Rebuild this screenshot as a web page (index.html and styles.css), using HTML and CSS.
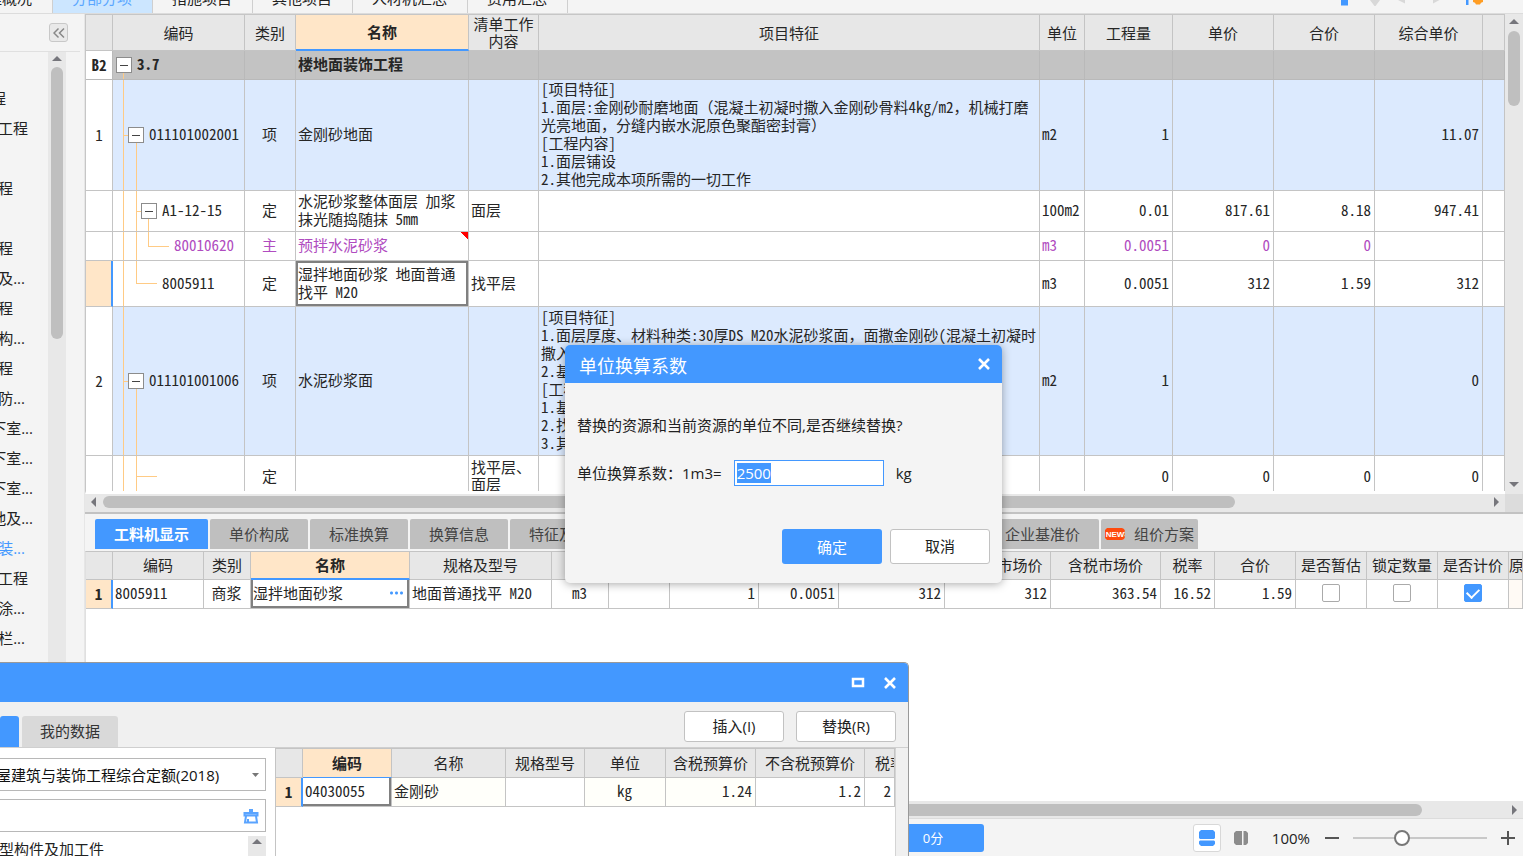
FILE: index.html
```html
<!DOCTYPE html>
<html lang="zh-CN">
<head>
<meta charset="utf-8">
<title>分部分项</title>
<link rel="stylesheet" href="styles.css">
</head>
<body>
<div class="app">
  <header class="topbar">
    <nav class="toptabs">
      <button class="toptab first">工程概况</button>
      <button class="toptab active">分部分项</button>
      <button class="toptab">措施项目</button>
      <button class="toptab">其他项目</button>
      <button class="toptab">人材机汇总</button>
      <button class="toptab">费用汇总</button>
    </nav>
    <svg class="topicons" width="150" height="13" viewBox="0 0 150 13" aria-hidden="true">
      <path fill="#4398ff" d="M6 0h7v5.500H6zM131 0h2.500v5h-2.500z"/>
      <path fill="#d8d8d8" d="M35 0h10l-4.500 6h-1zM63 0h7v3.500zM98 0h6.500l-6.500 3.500z"/>
      <path fill="#ff9d23" d="M138 0h10v2l-2 .8-1 1.700h-4l-1-1.700-2-.8z"/>
    </svg>
  </header>

  <div class="body">
    <aside class="side">
      <div class="side-head">
        <button class="collapse" aria-label="收起">
          <svg width="12" height="12" viewBox="0 0 12 12"><path d="M5.500 1.500 1 6l4.500 4.500M11 1.500 6.500 6l4.500 4.500" fill="none" stroke="#888" stroke-width="1.500"/></svg>
        </button>
      </div>
      <div class="side-main">
        <ul class="tree">
          <li></li>
          <li class="e">工程</li>
          <li class="b">工程</li>
          <li></li>
          <li class="d">工程</li>
          <li></li>
          <li class="d">工程</li>
          <li class="c">及...</li>
          <li class="d">工程</li>
          <li class="c">构...</li>
          <li class="d">工程</li>
          <li class="c">防...</li>
          <li class="a">下室...</li>
          <li class="a">下室...</li>
          <li class="a">下室...</li>
          <li class="a">他及...</li>
          <li class="c sel">装...</li>
          <li class="b">工程</li>
          <li class="c">涂...</li>
          <li class="c">栏...</li>
        </ul>
        <div class="vbar side-bar"><i class="tri up"></i><i class="thumb"></i></div>
      </div>
    </aside>

    <main class="content">
      <section class="upper">
        <div class="upper-row">
          <div class="grid-clip">
            <table class="grid main-grid">
              <colgroup><col class="w27"><col class="w132"><col class="w51"><col class="w173"><col class="w70"><col><col class="w45"><col class="w88"><col class="w101"><col class="w101"><col class="w108"><col class="w22"></colgroup>
              <thead>
                <tr class="h36"><th></th><th>编码</th><th>类别</th><th class="hot">名称</th><th>清单工作<br>内容</th><th>项目特征</th><th>单位</th><th>工程量</th><th>单价</th><th>合价</th><th>综合单价</th><th></th></tr>
              </thead>
              <tbody>
                <tr class="h29 group"><td class="rn">B2</td><td class="code t0"><button class="tg" aria-label="折叠"></button>3.7</td><td></td><td>楼地面装饰工程</td><td></td><td></td><td></td><td></td><td></td><td></td><td></td><td></td></tr>
                <tr class="h111 item"><td class="rn">1</td><td class="code t1"><button class="tg" aria-label="折叠"></button>011101002001</td><td class="c">项</td><td>金刚砂地面</td><td></td><td>[项目特征]<br>1.面层:金刚砂耐磨地面（混凝土初凝时撒入金刚砂骨料4kg/m2，机械打磨<br>光亮地面，分缝内嵌水泥原色聚酯密封膏）<br>[工程内容]<br>1.面层铺设<br>2.其他完成本项所需的一切工作</td><td>m2</td><td class="r">1</td><td></td><td></td><td class="r">11.07</td><td></td></tr>
                <tr class="h41"><td class="rn"></td><td class="code t2"><button class="tg" aria-label="折叠"></button>A1-12-15</td><td class="c">定</td><td>水泥砂浆整体面层 加浆<br>抹光随捣随抹 5mm</td><td>面层</td><td></td><td>100m2</td><td class="r">0.01</td><td class="r">817.61</td><td class="r">8.18</td><td class="r">947.41</td><td></td></tr>
                <tr class="h29 sub"><td class="rn"></td><td class="code t3">80010620</td><td class="c">主</td><td class="flag">预拌水泥砂浆</td><td></td><td></td><td>m3</td><td class="r">0.0051</td><td class="r">0</td><td class="r">0</td><td></td><td></td></tr>
                <tr class="h46"><td class="rn cur"></td><td class="code t4">8005911</td><td class="c">定</td><td class="picked">湿拌地面砂浆 地面普通<br>找平 M20</td><td>找平层</td><td></td><td>m3</td><td class="r">0.0051</td><td class="r">312</td><td class="r">1.59</td><td class="r">312</td><td></td></tr>
                <tr class="h149 item"><td class="rn">2</td><td class="code t1"><button class="tg" aria-label="折叠"></button>011101001006</td><td class="c">项</td><td>水泥砂浆面</td><td></td><td>[项目特征]<br>1.面层厚度、材料种类:30厚DS M20水泥砂浆面，面撒金刚砂(混凝土初凝时<br>撒入<br>2.基<br>[工程内容]<br>1.基<br>2.找<br>3.其</td><td>m2</td><td class="r">1</td><td></td><td></td><td class="r">0</td><td></td></tr>
                <tr class="h41 tight"><td class="rn"></td><td class="code t5"></td><td class="c">定</td><td></td><td>找平层、<br>面层</td><td></td><td></td><td class="r">0</td><td class="r">0</td><td class="r">0</td><td class="r">0</td><td></td></tr>
              </tbody>
            </table>
          </div>
          <div class="vbar main-bar"><i class="tri up"></i><i class="thumb"></i><i class="tri down"></i></div>
        </div>
        <div class="hbar-row"><div class="hbar"><i class="tri left"></i><i class="thumb"></i><i class="tri right"></i></div><div class="corner"></div></div>
      </section>

      <section class="lower">
        <nav class="subtabs">
          <button class="subtab active">工料机显示</button>
          <button class="subtab">单价构成</button>
          <button class="subtab">标准换算</button>
          <button class="subtab">换算信息</button>
          <button class="subtab">特征及内容</button>
          <button class="subtab push">企业基准价</button>
          <button class="subtab new"><svg width="20" height="12" viewBox="0 0 20 12" aria-hidden="true"><path fill="#ff4a0d" d="M2 0h15l2 1 1 2-1 1.500 1 1.500-1 1.500 1 1.500-1 2-2 1H2L0 10V2z"/><text x="10" y="9" text-anchor="middle" class="newtext">NEW</text></svg>组价方案</button>
        </nav>
        <div class="lower-grid">
          <table class="grid res-grid">
            <colgroup><col class="w27"><col class="w91"><col class="w47"><col class="w159"><col class="w142"><col class="w57"><col class="w61"><col class="w89"><col class="w80"><col class="w106"><col class="w106"><col class="w110"><col class="w54"><col class="w81"><col class="w71"><col class="w71"><col class="w71"><col></colgroup>
            <thead><tr class="h28"><th></th><th>编码</th><th>类别</th><th class="hot">名称</th><th>规格及型号</th><th>单位</th><th></th><th></th><th></th><th></th><th>不含税市场价</th><th>含税市场价</th><th>税率</th><th>合价</th><th>是否暂估</th><th>锁定数量</th><th>是否计价</th><th class="left">原</th></tr></thead>
            <tbody><tr class="h29"><td class="rn cur bold">1</td><td>8005911</td><td class="c">商浆</td><td class="picked"><div class="split">湿拌地面砂浆<button class="more" aria-label="选择"></button></div></td><td>地面普通找平 M20</td><td class="c">m3</td><td></td><td class="r">1</td><td class="r">0.0051</td><td class="r">312</td><td class="r">312</td><td class="r">363.54</td><td class="r">16.52</td><td class="r">1.59</td><td class="c"><input type="checkbox" aria-label="是否暂估"></td><td class="c"><input type="checkbox" aria-label="锁定数量"></td><td class="c"><input type="checkbox" aria-label="是否计价" checked></td><td class="warm"></td></tr></tbody>
          </table>
        </div>
        <div class="hbar low-bar"><i class="thumb"></i><i class="tri right"></i></div>
        <footer class="status">
          <button class="score">0分</button>
          <div class="view">
            <button class="vbtn on" aria-label="上下布局"><svg width="16" height="16" viewBox="0 0 16 16"><path fill="#4398ff" d="M2 0h12l2 2v6l-1 1H1L0 8V2zM1 10.500h14l1 1V14l-2 2H2l-2-2v-2.500z"/></svg></button>
            <button class="vbtn" aria-label="左右布局"><svg width="16" height="16" viewBox="0 0 16 16"><path fill="#8c8c8c" d="M3 1h6v14H3l-2-2V3zM10.500 1H13l2 2v10l-2 2h-2.500z"/></svg></button>
          </div>
          <label class="pct" for="zoom">100%</label>
          <button class="zbtn" aria-label="缩小"><svg width="16" height="16" viewBox="0 0 16 16"><path fill="#555" d="M1 7h14v2H1z"/></svg></button>
          <input class="zoom" id="zoom" type="range" min="0" max="100" value="35">
          <button class="zbtn" aria-label="放大"><svg width="16" height="16" viewBox="0 0 16 16"><path fill="#555" d="M1 7h14v2H1zM7 1h2v14H7z"/></svg></button>
        </footer>
      </section>
    </main>
  </div>

  <section class="finder">
    <header class="finder-head">
      <button aria-label="最大化"><svg width="14" height="12" viewBox="0 0 14 12"><path d="M2 2h10v7H2z" fill="none" stroke="#fff" stroke-width="2.500"/></svg></button>
      <button aria-label="关闭"><svg width="14" height="12" viewBox="0 0 14 12"><path d="M2 1l10 10M12 1 2 11" fill="none" stroke="#fff" stroke-width="2.600"/></svg></button>
    </header>
    <div class="finder-tools">
      <div class="ftabs"><button class="ftab on" aria-label="广联达数据"></button><button class="ftab">我的数据</button></div>
      <div class="fbtns"><button class="plain">插入(I)</button><button class="plain">替换(R)</button></div>
    </div>
    <div class="finder-main">
      <div class="fleft">
        <div class="combo">
          <select aria-label="定额库"><option>房屋建筑与装饰工程综合定额(2018)</option></select>
          <svg width="7" height="4" viewBox="0 0 7 4" aria-hidden="true"><path fill="#777" d="M0 0h7L3.500 4z"/></svg>
        </div>
        <div class="search">
          <input type="text" aria-label="搜索">
          <svg width="16" height="16" viewBox="0 0 16 16" aria-hidden="true"><path fill="#a4ccff" d="M2 5h12v2H2z"/><path fill="none" stroke="#5aa4ff" stroke-width="2" d="M7 5V2h2v3M1.500 7.500V5h13v2.500zM3 8l-1 6.500h12L13 8M5 14v-3"/></svg>
        </div>
        <div class="flist"><span class="fitem">大型构件及加工件</span><div class="vbar flist-bar"><i class="tri up"></i></div></div>
      </div>
      <div class="fright">
        <table class="grid find-grid">
          <colgroup><col class="w27"><col class="w89"><col class="w114"><col class="w79"><col class="w81"><col class="w90"><col class="w109"><col></colgroup>
          <thead><tr class="h29"><th></th><th class="hot thin">编码</th><th>名称</th><th>规格型号</th><th>单位</th><th>含税预算价</th><th>不含税预算价</th><th class="cut">税率</th></tr></thead>
          <tbody><tr class="h29"><td class="rn cur bold">1</td><td class="picked">04030055</td><td class="ivory">金刚砂</td><td></td><td class="c ivory">kg</td><td class="r ivory">1.24</td><td class="r">1.2</td><td class="r">2</td></tr></tbody>
        </table>
      </div>
    </div>
  </section>

  <section class="dialog" role="dialog" aria-labelledby="dlg-title">
    <header class="dlg-head"><span id="dlg-title">单位换算系数</span>
      <button aria-label="关闭"><svg width="14" height="14" viewBox="0 0 14 14"><path d="M2 2l10 10M12 2 2 12" fill="none" stroke="#fff" stroke-width="2.600"/></svg></button>
    </header>
    <div class="dlg-body">
      <p>替换的资源和当前资源的单位不同,是否继续替换?</p>
      <div class="field"><label for="ratio">单位换算系数：1m3=</label><input id="ratio" type="text" value="2500" autofocus><span>kg</span></div>
      <div class="dlg-btns"><button class="ok">确定</button><button class="plain">取消</button></div>
    </div>
  </section>
</div>
<script src="main.js"></script>
</body>
</html>
```

FILE: main.js
```js
const ratio = document.getElementById("ratio");
ratio.focus({ preventScroll: true });
ratio.select();
```

FILE: styles.css
```css
* { box-sizing: border-box; }
body {
  margin: 0;
  font: 15px/18px "Open Sans", "Noto Sans CJK SC", sans-serif;
  color: #222;
  overflow: hidden;
}
button {
  font: inherit;
  color: inherit;
  border: 0;
  padding: 0;
  background: none;
  white-space: nowrap;
}
svg { display: block; flex: none; }
.app {
  position: relative;
  height: 100vh;
  display: flex;
  flex-direction: column;
  background: #f4f4f4;
  overflow: hidden;
}

/* top tab strip */
.topbar {
  flex: none;
  height: 14px;
  display: flex;
  justify-content: space-between;
  overflow: hidden;
  border-bottom: 1px solid #dcdcdc;
  padding-right: 38px;
}
.toptabs { display: flex; align-items: flex-end; }
.toptab {
  height: 32px;
  padding: 8px 20px 6px 19px;
  border-right: 1px solid #cfcfcf;
  line-height: 18px;
}
.toptab.first { width: 53px; display: flex; justify-content: flex-end; }
.toptab.active { background: #cce6ff; color: #5aa6ff; }

.body { flex: 1; min-height: 0; display: flex; }

/* sidebar */
.side {
  flex: none;
  width: 85px;
  display: flex;
  flex-direction: column;
  border-right: 1px solid #e6e6e6;
}
.side-head {
  height: 38px;
  margin-right: 4px;
  padding-right: 12px;
  display: flex;
  align-items: center;
  justify-content: flex-end;
  border-bottom: 1px solid #e0e0e0;
}
.collapse {
  width: 19px;
  height: 19px;
  display: flex;
  align-items: center;
  justify-content: center;
  border: 1px solid #c8c8c8;
  border-radius: 3px;
  background: #e9e9e9;
}
.side-main { flex: 1; min-height: 0; display: flex; }
.tree {
  width: 48px;
  margin: 0;
  padding: 1px 0 0;
  list-style: none;
  overflow: hidden;
}
.tree li {
  height: 30px;
  display: flex;
  align-items: center;
  justify-content: flex-end;
  white-space: nowrap;
}
.tree .a { padding-right: 15px; }
.tree .b { padding-right: 20px; }
.tree .c { padding-right: 23px; }
.tree .d { padding-right: 35px; }
.tree .e { padding-right: 42px; }
.tree .sel { color: #4398ff; }

/* scroll bars */
.vbar {
  width: 18px;
  display: flex;
  flex-direction: column;
  align-items: center;
  background: #e8e8e8;
}
.hbar {
  height: 17px;
  display: flex;
  align-items: center;
  background: #e8e8e8;
}
.thumb { display: block; background: #bfbfbf; border-radius: 6px; }
.vbar .thumb { width: 12px; }
.hbar .thumb { height: 12px; }
.tri { flex: none; border: 5px solid transparent; }
.tri.up { border-bottom-color: #76767c; border-top-width: 0; }
.tri.down { border-top-color: #76767c; border-bottom-width: 0; margin-top: auto; }
.tri.left { border-right-color: #76767c; border-left-width: 0; }
.tri.right { border-left-color: #76767c; border-right-width: 0; margin-left: auto; }
.side-bar { padding-top: 4px; }
.side-bar .thumb { height: 272px; margin-top: 6px; }
.main-bar { padding: 5px 0 7px; flex: none; }
.main-bar .thumb { height: 75px; margin-top: 7px; }

/* panes */
.content { flex: 1; min-width: 0; display: flex; flex-direction: column; }
.upper {
  flex: 499 1 0;
  min-height: 0;
  display: flex;
  flex-direction: column;
  border-bottom: 2px solid #c2c2c2;
}
.upper-row { flex: 1; min-height: 0; display: flex; }
.grid-clip {
  flex: 1;
  min-width: 0;
  overflow: hidden;
  background: #fff;
  border-top: 1px solid #c6c6c6;
  border-left: 1px solid #c6c6c6;
  border-bottom: 3px solid #fff;
}
.hbar-row { display: flex; flex: none; height: 18px; background: #e8e8e8; }
.hbar-row .hbar { flex: 1; padding: 0 6px; }
.hbar-row .thumb { flex: 0 0 calc(81% - 8px); margin-left: 7px; }
.corner { width: 18px; background: #dcdcdc; }

/* grids */
.grid {
  width: 100%;
  table-layout: fixed;
  border-collapse: separate;
  border-spacing: 0;
  font-family: "Noto Sans Mono CJK SC", "Noto Sans CJK SC", sans-serif;
  color: #262626;
}
.grid th, .grid td {
  padding: 0 3px 2px 2px;
  border-right: 1px solid #c4c4c4;
  border-bottom: 1px solid #c4c4c4;
  white-space: nowrap;
  overflow: hidden;
  text-align: left;
}
.grid th {
  padding: 0 0 1px;
  background: #e7e7e7;
  font-weight: 400;
  text-align: center;
  line-height: 17px;
}
.grid th.hot { background: #ffe6c8; font-weight: 700; border-bottom: 2px solid #4398ff; }
.grid th.left { text-align: left; }
.grid th.cut { text-align: left; padding-left: 10px; }
.grid th.thin { border-bottom-width: 1px; }
.grid .tight td { line-height: 17px; }
.grid .c { text-align: center; }
.grid .r { text-align: right; }
.grid .rn { text-align: center; background: #fff; padding: 0; }
.grid .cur { background: #ffe6c8; border-right: 2px solid #4398ff; }
.grid .bold { font-weight: 700; }
.grid .picked { box-shadow: inset 0 0 0 2px #808080; }
.res-grid .picked { box-shadow: inset 2px 0 #808080, inset -2px 0 #808080, inset 0 -2px #808080; }
.find-grid .picked { box-shadow: inset -2px -2px #808080; }
.grid .ivory { background: #fffffa; }
.grid .warm { background: #fffaf5; }
.group td { background-color: #c3c3c3; font-weight: 700; border-color: #b9b9b9; }
.item td { background-color: #dceafe; }
.item .rn { background: #fff; }
.sub { color: #b04cc0; }
.grid .flag { background: linear-gradient(45deg, transparent 50%, #f00 50%) right top / 8px 7px no-repeat; }
.h28 { height: 28px; }
.h29 { height: 29px; }
.h36 { height: 36px; }
.h41 { height: 41px; }
.h46 { height: 46px; }
.h111 { height: 111px; }
.h149 { height: 149px; }
.w22 { width: 22px; } .w27 { width: 27px; } .w45 { width: 45px; } .w47 { width: 47px; }
.w51 { width: 51px; } .w54 { width: 54px; } .w57 { width: 57px; } .w61 { width: 61px; }
.w70 { width: 70px; } .w71 { width: 71px; } .w79 { width: 79px; } .w80 { width: 80px; }
.w81 { width: 81px; } .w88 { width: 88px; } .w89 { width: 89px; } .w90 { width: 90px; }
.w91 { width: 91px; } .w101 { width: 101px; } .w106 { width: 106px; } .w108 { width: 108px; }
.w109 { width: 109px; } .w110 { width: 110px; } .w114 { width: 114px; } .w132 { width: 132px; }
.w142 { width: 142px; } .w159 { width: 159px; } .w173 { width: 173px; }

/* outline tree: guide lines are drawn as cell backgrounds */
.code {
  --l: linear-gradient(#ffcb85, #ffcb85);
  background-repeat: no-repeat;
}
.grid .t0 { padding-left: 3px; background-image: var(--l); background-size: 1px 50%; background-position: 10px 100%; }
.grid .t1 {
  padding-left: 15px;
  background-image: var(--l), var(--l), var(--l);
  background-size: 1px 100%, 1px 50%, 6px 1px;
  background-position: 10px 0, 23px 100%, 10px 50%;
}
.grid .t2 {
  padding-left: 28px;
  background-image: var(--l), var(--l), var(--l), var(--l);
  background-size: 1px 100%, 1px 100%, 1px 50%, 6px 1px;
  background-position: 10px 0, 23px 0, 35px 100%, 23px 50%;
}
.grid .t3 {
  padding-left: 61px;
  background-image: var(--l), var(--l), var(--l), var(--l);
  background-size: 1px 100%, 1px 100%, 1px 50%, 21px 1px;
  background-position: 10px 0, 23px 0, 35px 0, 35px 50%;
}
.grid .t4 {
  padding-left: 49px;
  background-image: var(--l), var(--l), var(--l);
  background-size: 1px 100%, 1px 50%, 21px 1px;
  background-position: 10px 0, 23px 0, 23px 50%;
}
.grid .t5 {
  background-image: var(--l), var(--l), var(--l);
  background-size: 1px 100%, 1px 100%, 21px 1px;
  background-position: 10px 0, 23px 0, 23px 50%;
}
.tg {
  width: 16px;
  height: 16px;
  margin-right: 5px;
  vertical-align: middle;
  border: 1px solid #8c8c8c;
  background: linear-gradient(#444, #444) center / 8px 1px no-repeat #fff;
}

/* lower pane */
.lower { flex: 343 1 0; min-height: 0; display: flex; flex-direction: column; }
.subtabs {
  flex: none;
  height: 37px;
  max-width: 1113px;
  padding: 5px 0 2px 10px;
  display: flex;
  gap: 2px;
}
.subtab {
  height: 30px;
  padding: 0 19px;
  background: #bfbfbf;
  color: #444;
  border-radius: 2px 2px 0 0;
}
.subtab.active { background: #4398ff; color: #fff; font-weight: 700; }
.subtab.push { margin-left: auto; }
.subtab.new { display: flex; align-items: center; gap: 9px; padding: 0 4px; }
.newtext { font: 700 8px "Liberation Sans", sans-serif; fill: #fff; }
.lower-grid {
  flex: 1;
  min-height: 0;
  background: #fff;
  border-top: 1px solid #c4c4c4;
  border-left: 1px solid #e0e0e0;
  overflow: hidden;
}
.split { display: flex; align-items: center; justify-content: space-between; padding-right: 2px; }
.more {
  width: 15px;
  height: 4px;
  background: radial-gradient(circle, #4398ff 1px, transparent 2px) 0 0 / 5px 4px;
}
input[type="checkbox"] {
  appearance: none;
  display: block;
  width: 18px;
  height: 18px;
  margin: 0 auto;
  border: 1px solid #aaa;
  border-radius: 2px;
  background: #fff;
}
input[type="checkbox"]:checked { background: #4398ff; border-color: #4398ff; }
input[type="checkbox"]:checked::after {
  content: "";
  display: block;
  width: 6px;
  height: 10px;
  margin: 1px auto;
  border: solid #fff;
  border-width: 0 2px 2px 0;
  transform: rotate(45deg);
}
.low-bar { flex: none; padding-right: 6px; }
.low-bar .thumb { flex: 0 0 calc(93% + 5px); }
.status {
  flex: none;
  height: 38px;
  border-top: 1px solid #dcdcdc;
  padding-right: 7px;
  display: flex;
  align-items: center;
}
.score {
  width: 102px;
  height: 28px;
  margin: 0 auto 0 797px;
  border-radius: 3px;
  background: #4398ff;
  color: #fff;
  font-size: 13px;
}
.view { display: flex; gap: 6px; }
.vbtn {
  width: 28px;
  height: 28px;
  display: flex;
  align-items: center;
  justify-content: center;
  border: 1px solid transparent;
  border-radius: 3px;
}
.vbtn.on { background: #fff; border-color: #d8d8d8; }
.pct { margin: 0 14px 0 17px; }
.zoom {
  appearance: none;
  width: 134px;
  height: 16px;
  margin: 0 13px;
  background: linear-gradient(#c8c8c8, #c8c8c8) center / 100% 2px no-repeat;
}
.zoom::-webkit-slider-thumb {
  appearance: none;
  width: 16px;
  height: 16px;
  border: 2px solid #777;
  border-radius: 50%;
  background: #fff;
}

/* resource finder window */
.finder {
  position: absolute;
  left: 0;
  bottom: 0;
  width: 909px;
  height: 194px;
  display: flex;
  flex-direction: column;
  border: solid #999;
  border-width: 1px 1px 0 0;
  border-radius: 0 5px 0 0;
  background: #f0f0f0;
  overflow: hidden;
}
.finder-head {
  flex: none;
  height: 39px;
  padding-right: 11px;
  display: flex;
  align-items: center;
  justify-content: flex-end;
  gap: 18px;
  background: #4398ff;
}
.finder-tools {
  flex: none;
  height: 46px;
  display: flex;
  justify-content: space-between;
  border-bottom: 1px solid #cfcfcf;
  padding-right: 12px;
}
.ftabs { display: flex; align-items: flex-end; gap: 3px; }
.ftab { height: 31px; padding: 0 18px 1px; background: #d9d9d9; border-radius: 3px 3px 0 0; color: #333; }
.ftab.on { width: 19px; padding: 0; background: #4398ff; }
.fbtns { display: flex; gap: 12px; padding-top: 9px; }
.plain {
  width: 100px;
  height: 31px;
  padding-bottom: 1px;
  border: 1px solid #c2c2c2;
  border-radius: 3px;
  background: #fff;
}
.finder-main { flex: 1; min-height: 0; display: flex; padding-right: 12px; }
.fleft {
  width: 275px;
  flex: none;
  background: #fff;
  padding: 10px 9px 0 0;
  display: flex;
  flex-direction: column;
}
.combo, .search {
  flex: none;
  height: 33px;
  margin-bottom: 8px;
  border: 1px solid #b8b8b8;
  border-left: 0;
  display: flex;
  align-items: center;
  justify-content: space-between;
  padding-right: 6px;
}
.search { margin-bottom: 4px; }
.combo select {
  appearance: none;
  flex: 1;
  margin-left: -30px;
  padding: 0 0 0 11px;
  border: 0;
  background: none;
  font: inherit;
  color: #111;
}
.search input { flex: 1; min-width: 0; border: 0; font: inherit; }
.flist { flex: 1; min-height: 0; display: flex; justify-content: space-between; overflow: hidden; }
.fitem { margin: 0 0 0 -16px; padding-top: 4px; white-space: nowrap; }
.flist-bar { padding-top: 3px; }
.fright {
  flex: 1;
  min-width: 0;
  background: #fff;
  border-left: 1px solid #c4c4c4;
  border-top: 1px solid #c4c4c4;
  border-right: 1px solid #d4d4d4;
}

/* unit conversion dialog */
.dialog {
  position: absolute;
  left: 565px;
  top: 345px;
  width: 437px;
  border-radius: 5px;
  background: #f4f4f4;
  box-shadow: 0 1px 10px rgba(0, 0, 0, .35);
  overflow: hidden;
}
.dlg-head {
  height: 38px;
  padding: 0 11px 0 14px;
  display: flex;
  align-items: center;
  justify-content: space-between;
  background: #4398ff;
  color: #fff;
  font-size: 18px;
  line-height: 24px;
}
.dlg-head span { padding-top: 3px; }
.dlg-body { padding: 33px 12px 19px; }
.dlg-body p { margin: 0 0 26px; }
.field { display: flex; align-items: center; gap: 12px; }
.field input {
  width: 150px;
  height: 26px;
  padding: 0 2px;
  border: 1px solid #4398ff;
  outline: 0;
  background: #fff;
  font: inherit;
}
.field input::selection { background: #4398ff; color: #fff; }
.dlg-btns { display: flex; justify-content: flex-end; gap: 8px; margin-top: 43px; }
.dlg-btns button { width: 100px; height: 35px; }
.ok { background: #4398ff; color: #fff; border-radius: 3px; }
```
